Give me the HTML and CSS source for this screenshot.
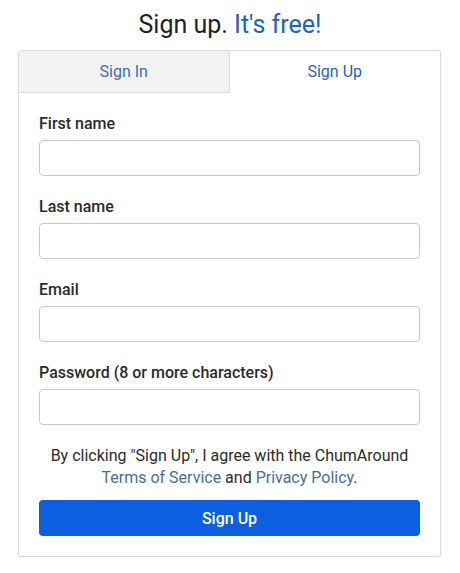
FILE: index.html
```html
<!DOCTYPE html>
<html lang="en">
<head>
<meta charset="utf-8">
<title>Sign up</title>
<link rel="stylesheet" href="styles.css">
</head>
<body>
<h1 class="title">Sign up. <span class="title-accent">It's free!</span></h1>
<div class="card">
  <div class="tabs">
    <a class="tab tab-inactive" href="#">Sign In</a>
    <a class="tab tab-active" href="#">Sign Up</a>
  </div>
  <form class="form">
    <div class="field">
      <label class="label" for="fn">First name</label>
      <input class="input" id="fn" type="text">
    </div>
    <div class="field">
      <label class="label" for="ln">Last name</label>
      <input class="input" id="ln" type="text">
    </div>
    <div class="field">
      <label class="label" for="em">Email</label>
      <input class="input" id="em" type="email">
    </div>
    <div class="field">
      <label class="label" for="pw">Password (8 or more characters)</label>
      <input class="input" id="pw" type="password">
    </div>
    <p class="terms">By clicking "Sign Up", I agree with the ChumAround <a class="terms-link" href="#">Terms of Service</a> and <a class="terms-link" href="#">Privacy Policy</a>.</p>
    <button class="submit" type="button">Sign Up</button>
  </form>
</div>
</body>
</html>
```
FILE: styles.css
```css
* { box-sizing: border-box; }
body {
  margin: 0;
  background: #fff;
  font-family: Roboto, "Liberation Sans", Arial, sans-serif;
  color: #333;
}
.title {
  margin: 11px 0 11px;
  font-size: 25px;
  line-height: 28px;
  font-weight: 400;
  text-align: center;
  color: #222;
}
.title-accent { color: #1f62c2; }
.card {
  margin-left: 18px;
  width: 423px;
  border: 1px solid #dcdcdc;
  border-radius: 3px;
  box-shadow: 0 1px 2px rgba(0,0,0,0.08);
  background: #fff;
}
.tabs {
  display: grid;
  grid-template-columns: 1fr 1fr;
}
.tab {
  height: 42px;
  display: flex;
  align-items: center;
  justify-content: center;
  font-size: 16px;
  line-height: 20px;
  color: #3f6fb2;
  text-decoration: none;
}
.tab-inactive {
  background: #f2f2f2;
  border-right: 1px solid #dcdcdc;
  border-bottom: 1px solid #dcdcdc;
  border-top-left-radius: 2px;
}
.tab-active { color: #2b64b0; }
.form {
  padding: 20px 20px 20px;
  display: flex;
  flex-direction: column;
}
.field {
  display: flex;
  flex-direction: column;
  margin-bottom: 20px;
}
.label {
  font-size: 16px;
  line-height: 22px;
  font-weight: 500;
  color: #2b2b2b;
  margin-bottom: 5px;
}
.input {
  height: 36px;
  width: 100%;
  border: 1px solid #c9c9c9;
  border-radius: 4px;
  background: #fff;
  font: inherit;
  padding: 0 10px;
}
.terms {
  margin: 0 0 11px;
  font-size: 16px;
  line-height: 22px;
  text-align: center;
  color: #2b2b2b;
}
.terms-link {
  color: #4a6f97;
  text-decoration: none;
}
.submit {
  height: 36px;
  width: 100%;
  border: none;
  border-radius: 4px;
  background: #0b60e2;
  color: #fff;
  font-family: Roboto, "Liberation Sans", Arial, sans-serif;
  font-size: 16px;
  font-weight: 500;
}
```
